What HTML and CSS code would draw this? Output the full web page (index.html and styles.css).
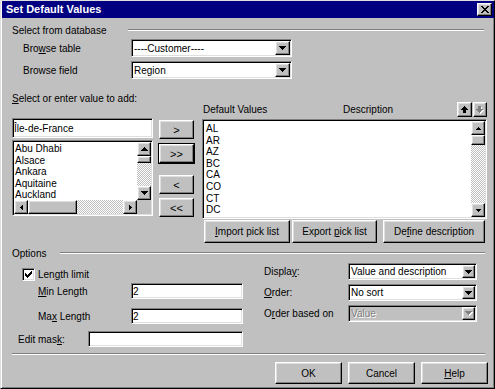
FILE: index.html
```html
<!DOCTYPE html>
<html>
<head>
<meta charset="utf-8">
<title>Set Default Values</title>
<link rel="stylesheet" href="styles.css">
</head>
<body>
<div class="window">
  <div class="titlebar">
    <span class="title">Set Default Values</span>
    <span class="close raised"><svg width="8" height="7" viewBox="0 0 8 7"><path d="M0 0h2v1H0zM6 0h2v1H6zM1 1h2v1H1zM5 1h2v1H5zM2 2h4v1H2zM3 3h2v1H3zM2 4h4v1H2zM1 5h2v1H1zM5 5h2v1H5zM0 6h2v1H0zM6 6h2v1H6z"/></svg></span>
  </div>
  <div class="content">
    <div class="grouphead gh-top"><span class="gh-label gh-db">Select from database</span><span class="etch"></span></div>
    <div class="brow brow-first">
      <span class="blabel">Bro<u>w</u>se table</span>
      <div class="combo combo-browse sunken"><span class="cval">----Customer----</span><span class="ddbtn raised"><svg width="7" height="4" viewBox="0 0 7 4"><path d="M0 0h7v1H0zM1 1h5v1H1zM2 2h3v1H2zM3 3h1v1H3z"/></svg></span></div>
    </div>
    <div class="brow brow-second">
      <span class="blabel">Browse field</span>
      <div class="combo combo-browse sunken"><span class="cval">Region</span><span class="ddbtn raised"><svg width="7" height="4" viewBox="0 0 7 4"><path d="M0 0h7v1H0zM1 1h5v1H1zM2 2h3v1H2zM3 3h1v1H3z"/></svg></span></div>
    </div>

    <div class="main">
      <div class="leftcol">
        <div class="enter-label"><u>S</u>elect or enter value to add:</div>
        <div class="entry sunken">Île-de-France</div>
        <div class="listbox left-list sunken">
          <div class="items">
            <div>Abu Dhabi</div>
            <div>Alsace</div>
            <div>Ankara</div>
            <div>Aquitaine</div>
            <div>Auckland</div>
          </div>
          <div class="vscroll">
            <span class="sbtn raised"><svg width="7" height="4" viewBox="0 0 7 4"><path d="M3 0h1v1H3zM2 1h3v1H2zM1 2h5v1H1zM0 3h7v1H0z"/></svg></span>
            <span class="vthumb raised"></span>
            <span class="track"></span>
            <span class="sbtn raised"><svg width="7" height="4" viewBox="0 0 7 4"><path d="M0 0h7v1H0zM1 1h5v1H1zM2 2h3v1H2zM3 3h1v1H3z"/></svg></span>
          </div>
          <div class="hscroll">
            <span class="sbtn raised"><svg width="3" height="5" viewBox="0 0 3 5"><path d="M2 0h1v5H2zM1 1h1v3H1zM0 2h1v1H0z"/></svg></span>
            <span class="hthumb raised"></span>
            <span class="track"></span>
            <span class="sbtn raised"><svg width="3" height="5" viewBox="0 0 3 5"><path d="M0 0h1v5H0zM1 1h1v3H1zM2 2h1v1H2z"/></svg></span>
          </div>
          <div class="corner"></div>
        </div>
      </div>

      <div class="movecol">
        <div class="mbtn raised mb-add">&gt;</div>
        <div class="mbtn raised mb-addall default">&gt;&gt;</div>
        <div class="mbtn raised mb-rem">&lt;</div>
        <div class="mbtn raised mb-remall">&lt;&lt;</div>
      </div>

      <div class="rightcol">
        <div class="dvhead">
          <span class="dv-val">Default Values</span>
          <span class="dv-desc">Description</span>
          <span class="arrbtn arr-up raised"><svg width="7" height="7" viewBox="0 0 7 7"><path d="M3 0h1v1H3zM2 1h3v1H2zM1 2h5v1H1zM0 3h7v1H0zM2 4h3v3H2z"/></svg></span>
          <span class="arrbtn arr-down raised"><svg width="8" height="8" viewBox="0 0 8 8"><path fill="#fff" d="M3 1h3v3H3zM1 4h7v1H1zM2 5h5v1H2zM3 6h3v1H3zM4 7h1v1H4z"/><path fill="#808080" d="M2 0h3v3H2zM0 3h7v1H0zM1 4h5v1H1zM2 5h3v1H2zM3 6h1v1H3z"/></svg></span>
        </div>
        <div class="listbox right-list sunken">
          <div class="items">
            <div>AL</div>
            <div>AR</div>
            <div>AZ</div>
            <div>BC</div>
            <div>CA</div>
            <div>CO</div>
            <div>CT</div>
            <div>DC</div>
            <div>DE</div>
          </div>
          <div class="vscroll">
            <span class="sbtn raised"><svg width="5" height="3" viewBox="0 0 5 3"><path d="M2 0h1v1H2zM1 1h3v1H1zM0 2h5v1H0z"/></svg></span>
            <span class="vthumb raised"></span>
            <span class="track"></span>
            <span class="sbtn raised"><svg width="5" height="3" viewBox="0 0 5 3"><path d="M0 0h5v1H0zM1 1h3v1H1zM2 2h1v1H2z"/></svg></span>
          </div>
        </div>
        <div class="pickrow">
          <div class="pbtn raised pb-import"><span><u>I</u>mport pick list</span></div>
          <div class="pbtn raised pb-export"><span>Export <u>p</u>ick list</span></div>
          <div class="pbtn raised pb-define"><span>De<u>f</u>ine description</span></div>
        </div>
      </div>
    </div>

    <div class="grouphead gh-options"><span class="gh-label gh-opt">Options</span><span class="etch"></span></div>

    <div class="optbody">
      <div class="optleft">
        <div class="chkrow">
          <span class="checkbox sunken"><svg width="7" height="7" viewBox="0 0 7 7"><path d="M6 0h1v1H6zM5 1h2v1H5zM0 2h1v1H0zM4 2h3v1H4zM0 3h2v1H0zM3 3h3v1H3zM0 4h5v1H0zM1 5h3v1H1zM2 6h1v1H2z"/></svg></span>
          <span class="chklabel">Len<u>g</u>th limit</span>
        </div>
        <div class="frow fr-min"><span class="flabel"><u>M</u>in Length</span><div class="field sunken">2</div></div>
        <div class="frow fr-max"><span class="flabel">Ma<u>x</u> Length</span><div class="field sunken">2</div></div>
        <div class="frow fr-edit"><span class="flabel">Edit mas<u>k</u>:</span><div class="field sunken"></div></div>
      </div>
      <div class="optright">
        <div class="crow cr-display"><span class="clabel">Displa<u>y</u>:</span><div class="combo combo-opt sunken"><span class="cval">Value and description</span><span class="ddbtn raised"><svg width="7" height="4" viewBox="0 0 7 4"><path d="M0 0h7v1H0zM1 1h5v1H1zM2 2h3v1H2zM3 3h1v1H3z"/></svg></span></div></div>
        <div class="crow cr-order"><span class="clabel"><u>O</u>rder:</span><div class="combo combo-opt sunken"><span class="cval">No sort</span><span class="ddbtn raised"><svg width="7" height="4" viewBox="0 0 7 4"><path d="M0 0h7v1H0zM1 1h5v1H1zM2 2h3v1H2zM3 3h1v1H3z"/></svg></span></div></div>
        <div class="crow cr-based"><span class="clabel">O<u>r</u>der based on</span><div class="combo combo-opt disabled sunken"><span class="cval">Value</span><span class="ddbtn raised"><svg width="8" height="5" viewBox="0 0 8 5"><path fill="#fff" d="M1 1h7v1H1zM2 2h5v1H2zM3 3h3v1H3zM4 4h1v1H4z"/><path fill="#808080" d="M0 0h7v1H0zM1 1h5v1H1zM2 2h3v1H2zM3 3h1v1H3z"/></svg></span></div></div>
      </div>
    </div>

    <div class="sep"></div>

    <div class="btnrow">
      <div class="dbtn raised">OK</div>
      <div class="dbtn raised">Cancel</div>
      <div class="dbtn raised"><span><u>H</u>elp</span></div>
    </div>
  </div>
</div>
</body>
</html>
```

FILE: styles.css
```css
* { box-sizing: border-box; }
html, body { margin: 0; padding: 0; overflow: hidden; background: #c0c0c0; }
body { font-family: "Liberation Sans", Arial, sans-serif; font-size: 10px; color: #000; }
u { text-decoration: underline; text-underline-offset: 1px; }

.window {
  width: 495px; height: 389px; background: #c0c0c0;
  border: 1px solid; border-color: #dfdfdf #000 #000 #dfdfdf;
  box-shadow: inset 1px 0 #fff, inset -1px -1px #808080;
  overflow: hidden;
}
.titlebar {
  height: 17px; margin-left: 1px; background: #000080; color: #fff;
  display: flex; align-items: center; padding-left: 4px;
  font-size: 11px; font-weight: bold;
}
.title { flex: 1; line-height: 13px; }
.close { width: 15px; height: 13px; margin-right: 2px; }

.raised {
  background: #c0c0c0; border: 1px solid; border-color: #fff #000 #000 #fff;
  box-shadow: inset -1px -1px #808080, inset 1px 1px #dfdfdf;
  display: flex; align-items: center; justify-content: center;
}
.sunken {
  background: #fff; border: 1px solid; border-color: #808080 #fff #fff #808080;
  box-shadow: inset 1px 1px #000, inset -1px -1px #dfdfdf; padding: 1px;
}
svg { display: block; shape-rendering: crispEdges; }

/* group headers */
.grouphead { display: flex; height: 13px; line-height: 13px; padding-left: 11px; }
.gh-top { margin-top: 6px; padding-right: 10px; }
.gh-options { margin-top: 4px; padding-right: 9px; }
.gh-label { white-space: nowrap; }
.gh-db { width: 116px; }
.gh-opt { width: 48px; }
.etch { flex: 1; height: 2px; margin-top: 5px; border-top: 1px solid #808080; border-bottom: 1px solid #fff; }

/* browse rows */
.brow { display: flex; align-items: center; padding-left: 22px; }
.brow-first { margin-top: 2px; }
.brow-second { margin-top: 4px; }
.blabel { width: 108px; white-space: nowrap; }

.combo { display: flex; align-items: stretch; }
.combo-browse { width: 161px; height: 18px; }
.combo-opt { width: 129px; height: 17px; }
.cval { flex: 1; padding-left: 1px; display: flex; align-items: center; white-space: nowrap; overflow: hidden; }
.combo-browse .ddbtn { width: 15px; }
.combo-opt .ddbtn { width: 13px; }
.combo.disabled { background: #c0c0c0; }
.combo.disabled .cval { color: #808080; text-shadow: 1px 1px 0 #fff; }

/* main area */
.main { display: flex; margin-top: 13px; padding-left: 11px; }
.leftcol { width: 141px; }
.enter-label { height: 13px; line-height: 13px; white-space: nowrap; }
.entry { margin-top: 13px; height: 20px; display: flex; align-items: center; padding-left: 1px; }

.listbox { display: grid; overflow: hidden; }
.left-list { margin-top: 2px; height: 76px; grid-template-columns: 1fr 14px; grid-template-rows: 1fr 14px; }
.right-list { margin-top: 1px; height: 100px; grid-template-columns: 1fr 14px; grid-template-rows: 1fr; }
.items { overflow: hidden; }
.left-list .items { padding: 1px 0 0 1px; line-height: 11.5px; }
.right-list .items { padding: 2px 0 0 2px; line-height: 11.6px; }

.vscroll { display: flex; flex-direction: column; }
.hscroll { display: flex; }
.sbtn { flex: none; }
.vscroll .sbtn { height: 14px; }
.hscroll .sbtn { width: 14px; }
.left-list .vthumb { height: 7px; flex: none; }
.right-list .vthumb { height: 10px; flex: none; }
.hthumb { width: 49px; flex: none; }
.track {
  flex: 1; background-color: #fff;
  background-image: repeating-conic-gradient(#c0c0c0 0% 25%, #fff 0% 50%);
  background-size: 2px 2px;
}
.corner { background: #c0c0c0; }

.movecol { width: 35px; margin-left: 6px; }
.mbtn { height: 19px; font-size: 11px; }
.mb-add { margin-top: 28px; }
.mb-addall { margin-top: 5px; }
.mb-rem { margin-top: 12px; }
.mb-remall { margin-top: 4px; }
.default { outline: 1px solid #000; }

.rightcol { width: 285px; margin-left: 8px; }
.dvhead { display: flex; align-items: center; height: 17px; margin-top: 9px; }
.dv-val { width: 141px; padding-left: 1px; }
.dv-desc { flex: 1; }
.arrbtn { width: 15px; height: 15px; }
.arr-down { width: 14px; margin-left: 1px; }

.pickrow { display: flex; margin-top: 1px; padding-left: 2px; }
.pbtn { height: 23px; }
.pb-import { width: 86px; }
.pb-export { width: 85px; margin-left: 2px; }
.pb-define { width: 102px; margin-left: 6px; }

/* options */
.optbody { display: flex; }
.optleft { width: 244px; }
.chkrow { display: flex; align-items: center; height: 13px; margin-top: 8px; padding-left: 21px; }
.checkbox { width: 13px; height: 13px; display: flex; align-items: center; justify-content: center; }
.chklabel { margin-left: 3px; }
.frow { display: flex; align-items: center; }
.field { height: 16px; display: flex; align-items: center; padding-left: 1px; }
.fr-min, .fr-max { padding-left: 37px; }
.fr-min .flabel, .fr-max .flabel { width: 93px; }
.fr-min .field, .fr-max .field { width: 112px; }
.fr-min { margin-top: 2px; }
.fr-max { margin-top: 9px; }
.fr-edit { margin-top: 7px; padding-left: 17px; }
.fr-edit .flabel { width: 70px; }
.fr-edit .field { width: 155px; }

.optright { padding-left: 19px; }
.crow { display: flex; align-items: center; }
.clabel { width: 84px; white-space: nowrap; }
.cr-display { margin-top: 3px; }
.cr-order, .cr-based { margin-top: 4px; }

.sep { height: 2px; margin: 6px 9px 0 11px; border-top: 1px solid #808080; border-bottom: 1px solid #fff; }

.btnrow { display: flex; gap: 6px; margin-top: 7px; padding-left: 274px; }
.dbtn { width: 67px; height: 22px; }
```
